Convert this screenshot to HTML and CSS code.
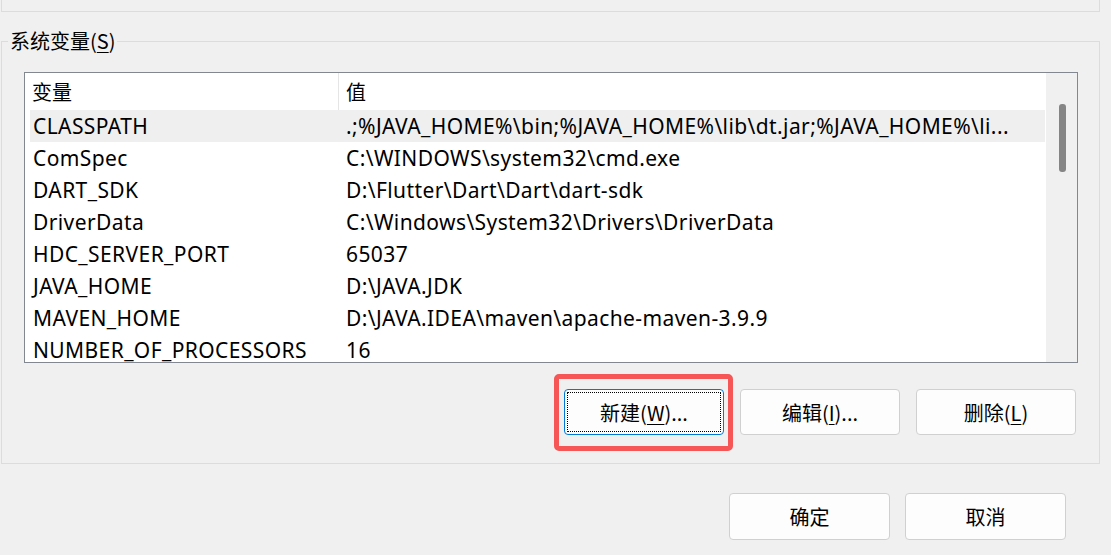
FILE: index.html
```html
<!DOCTYPE html>
<html lang="zh-CN">
<head>
  <meta charset="UTF-8" />
  <title>环境变量</title>
  <link rel="stylesheet" href="styles.css">
</head>
<body>
  <div class="grupo-anterior"></div>

  <fieldset class="grupo">
    <legend>系统变量(<u>S</u>)</legend>

    <div class="contenido">
      <div class="lista">
        <div class="tabla">
          <div class="cabecera">
            <div class="col1">变量</div>
            <div class="col2">值</div>
          </div>
          <div class="fila activa">
            <div class="col1">CLASSPATH</div>
            <div class="col2">.;%JAVA_HOME%\bin;%JAVA_HOME%\lib\dt.jar;%JAVA_HOME%\li...</div>
          </div>
          <div class="fila">
            <div class="col1">ComSpec</div>
            <div class="col2">C:\WINDOWS\system32\cmd.exe</div>
          </div>
          <div class="fila">
            <div class="col1">DART_SDK</div>
            <div class="col2">D:\Flutter\Dart\Dart\dart-sdk</div>
          </div>
          <div class="fila">
            <div class="col1">DriverData</div>
            <div class="col2">C:\Windows\System32\Drivers\DriverData</div>
          </div>
          <div class="fila">
            <div class="col1">HDC_SERVER_PORT</div>
            <div class="col2">65037</div>
          </div>
          <div class="fila">
            <div class="col1">JAVA_HOME</div>
            <div class="col2">D:\JAVA.JDK</div>
          </div>
          <div class="fila">
            <div class="col1">MAVEN_HOME</div>
            <div class="col2">D:\JAVA.IDEA\maven\apache-maven-3.9.9</div>
          </div>
          <div class="fila">
            <div class="col1">NUMBER_OF_PROCESSORS</div>
            <div class="col2">16</div>
          </div>
        </div>
        <div class="scroll">
          <div class="pulgar"></div>
        </div>
      </div>

      <div class="acciones">
        <button class="btn enfocado">新建(<u>W</u>)...<span class="marca"></span></button>
        <button class="btn">编辑(<u>I</u>)...</button>
        <button class="btn">删除(<u>L</u>)</button>
      </div>
    </div>
  </fieldset>

  <div class="pie">
    <button class="btn btn-pie">确定</button>
    <button class="btn btn-pie">取消</button>
  </div>
</body>
</html>
```

FILE: styles.css
```css
body {
  margin: 0;
  width: 1111px;
  height: 555px;
  overflow: hidden;
  background: #f0f0f0;
  color: #000;
  font-family: "Noto Sans", "Noto Sans CJK SC", sans-serif;
  font-size: 20px;
}

u {
  text-decoration-thickness: 1px;
  text-underline-offset: 3px;
}

.grupo-anterior {
  margin-left: 1px;
  width: 1099px;
  height: 12px;
  box-sizing: border-box;
  border: 1px solid #dcdcdc;
  border-top: none;
}

.grupo {
  margin: 18px 0 0 1px;
  width: 1099px;
  box-sizing: border-box;
  border: 1px solid #dcdcdc;
  padding: 0;
  min-width: 0;
}

.grupo legend {
  margin-left: 6px;
  padding: 0 2px;
  line-height: 22px;
  font-family: "Noto Sans CJK SC", sans-serif;
}

.contenido {
  padding: 20px 21px 28px 22px;
}

.lista {
  display: flex;
  height: 291px;
  box-sizing: border-box;
  border: 1px solid #828790;
  background: #fff;
  overflow: hidden;
}

.tabla {
  flex: 1;
  min-width: 0;
}

.cabecera {
  display: flex;
  height: 37px;
  align-items: stretch;
  font-family: "Noto Sans CJK SC", sans-serif;
}

.cabecera .col1 {
  width: 306px;
  padding-left: 7px;
  border-right: 1px solid #e5e5e5;
  line-height: 37px;
}

.cabecera .col2 {
  padding-left: 7px;
  line-height: 37px;
}

.fila {
  display: flex;
  height: 32px;
  line-height: 32px;
  margin-left: 5px;
  white-space: nowrap;
  font-size: 21px;
  letter-spacing: 0.4px;
}

.fila.activa {
  background: #efefef;
}

.fila .col1 {
  width: 313px;
  padding-left: 3px;
  flex-shrink: 0;
}

.fila .col2 {
  overflow: hidden;
}

.scroll {
  width: 31px;
  margin-left: 1px;
  background: #f0f0f0;
  display: flex;
  justify-content: center;
  padding-top: 31px;
}

.pulgar {
  width: 7px;
  height: 68px;
  margin-left: 2px;
  border-radius: 3px;
  background: #858585;
}

.acciones {
  display: flex;
  justify-content: flex-end;
  gap: 16px;
  margin-top: 26px;
  padding-right: 2px;
}

.btn {
  position: relative;
  width: 160px;
  height: 46px;
  padding: 0;
  box-sizing: border-box;
  border: 1px solid #d0d0d0;
  border-radius: 4px;
  background: #fdfdfd;
  color: #000;
  font-family: "Noto Sans CJK SC", sans-serif;
  font-size: 20px;
}

.btn.enfocado {
  border-color: #0078d4;
  outline: 1px dotted #000;
  outline-offset: -4px;
}

.marca {
  position: absolute;
  left: -11px;
  top: -16px;
  right: -10px;
  bottom: -17px;
  border: 5px solid #f65656;
  border-radius: 5px;
  pointer-events: none;
}

.pie {
  display: flex;
  justify-content: flex-end;
  gap: 15px;
  margin-top: 29px;
  padding-right: 45px;
}

.btn-pie {
  width: 161px;
  height: 47px;
}
```
